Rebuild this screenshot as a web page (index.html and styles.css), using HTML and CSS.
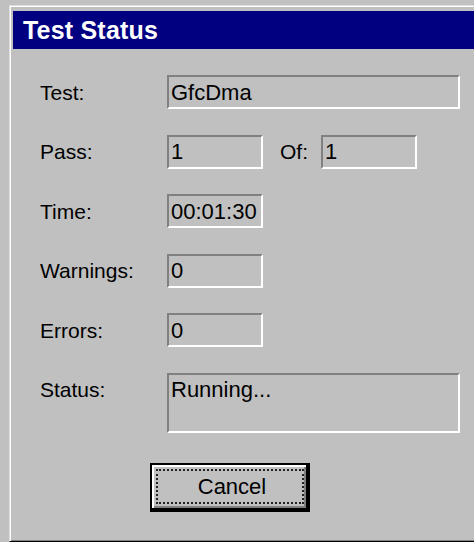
FILE: index.html
```html
<!DOCTYPE html>
<html lang="en">
<head>
<meta charset="utf-8">
<title>Test Status</title>
<link rel="stylesheet" href="styles.css">
</head>
<body>
  <div class="window">
    <div class="titlebar"><span class="title">Test Status</span></div>
    <div class="content">
      <div class="form">
        <div class="row">
          <span class="label">Test:</span>
          <div class="field wide">GfcDma</div>
        </div>
        <div class="row">
          <span class="label">Pass:</span>
          <div class="field">1</div>
          <span class="label label-of">Of:</span>
          <div class="field">1</div>
        </div>
        <div class="row">
          <span class="label">Time:</span>
          <div class="field">00:01:30</div>
        </div>
        <div class="row">
          <span class="label">Warnings:</span>
          <div class="field">0</div>
        </div>
        <div class="row">
          <span class="label">Errors:</span>
          <div class="field">0</div>
        </div>
        <div class="row row-top">
          <span class="label label-top">Status:</span>
          <div class="field wide tall">Running...</div>
        </div>
      </div>
      <div class="actions">
        <button class="btn" type="button"><span class="focus">Cancel</span></button>
      </div>
    </div>
  </div>
</body>
</html>
```

FILE: styles.css
```css
html, body {
  margin: 0;
  padding: 0;
}

body {
  background: #c0c0c0;
  height: 542px;
  overflow: hidden;
  font-family: "Liberation Sans", Arial, sans-serif;
  font-size: 22px;
  line-height: 25px;
  color: #000;
}

/* Dialog frame: light outer edge top/left, dark edge bottom */
.window {
  box-sizing: border-box;
  margin: 5px 0 0 9px;
  width: 465px;
  height: 537px;
  padding: 5px 0 0 3px;
  background: #c0c0c0;
  border: 1px solid;
  border-right: 0;
  border-color: #dfdfdf #000 #000 #dfdfdf;
  box-shadow: inset 1px 1px #fff, inset 0 -1px #808080;
}

.titlebar {
  height: 38px;
  background: #000080;
  display: flex;
  align-items: center;
  padding-left: 10px;
}

.title {
  color: #fff;
  font-weight: bold;
  font-size: 25px;
  line-height: 30px;
  letter-spacing: 0.2px;
}

.content {
  display: flex;
  flex-direction: column;
}

.form {
  display: flex;
  flex-direction: column;
  gap: 25.6px;
  padding: 26px 0 0 27px;
}

.row {
  display: flex;
  align-items: center;
}

.row-top {
  align-items: flex-start;
}

.label {
  width: 127px;
  flex: none;
  font-size: 21px;
  white-space: nowrap;
}

.label-top {
  padding-top: 4px;
}

.label-of {
  width: 41px;
  margin-left: 17px;
}

/* Sunken read-only text box */
.field {
  box-sizing: border-box;
  width: 96px;
  height: 34px;
  padding: 0 2px;
  display: flex;
  align-items: center;
  background: #c0c0c0;
  border: 2px solid;
  border-color: #808080 #fff #fff #808080;
  white-space: nowrap;
  overflow: hidden;
}

.field.wide {
  width: 293px;
}

.field.tall {
  height: 60px;
  align-items: flex-start;
  padding-top: 2px;
}

.actions {
  display: flex;
  padding: 30px 0 0 137px;
}

/* Default push button with heavy bottom/right edge */
.btn {
  box-sizing: border-box;
  width: 160px;
  height: 49px;
  margin: 0;
  padding: 4px 2px 4px 4px;
  display: flex;
  background: #c0c0c0;
  border-style: solid;
  border-color: #000;
  border-width: 2px 4px 4px 2px;
  box-shadow: inset 2px 2px #fff, inset -2px -2px #808080;
  font: inherit;
  color: #000;
  cursor: default;
}

.focus {
  flex: 1;
  display: flex;
  align-items: center;
  justify-content: center;
  border: 2px dotted #222;
  padding-left: 4px;
}
```
